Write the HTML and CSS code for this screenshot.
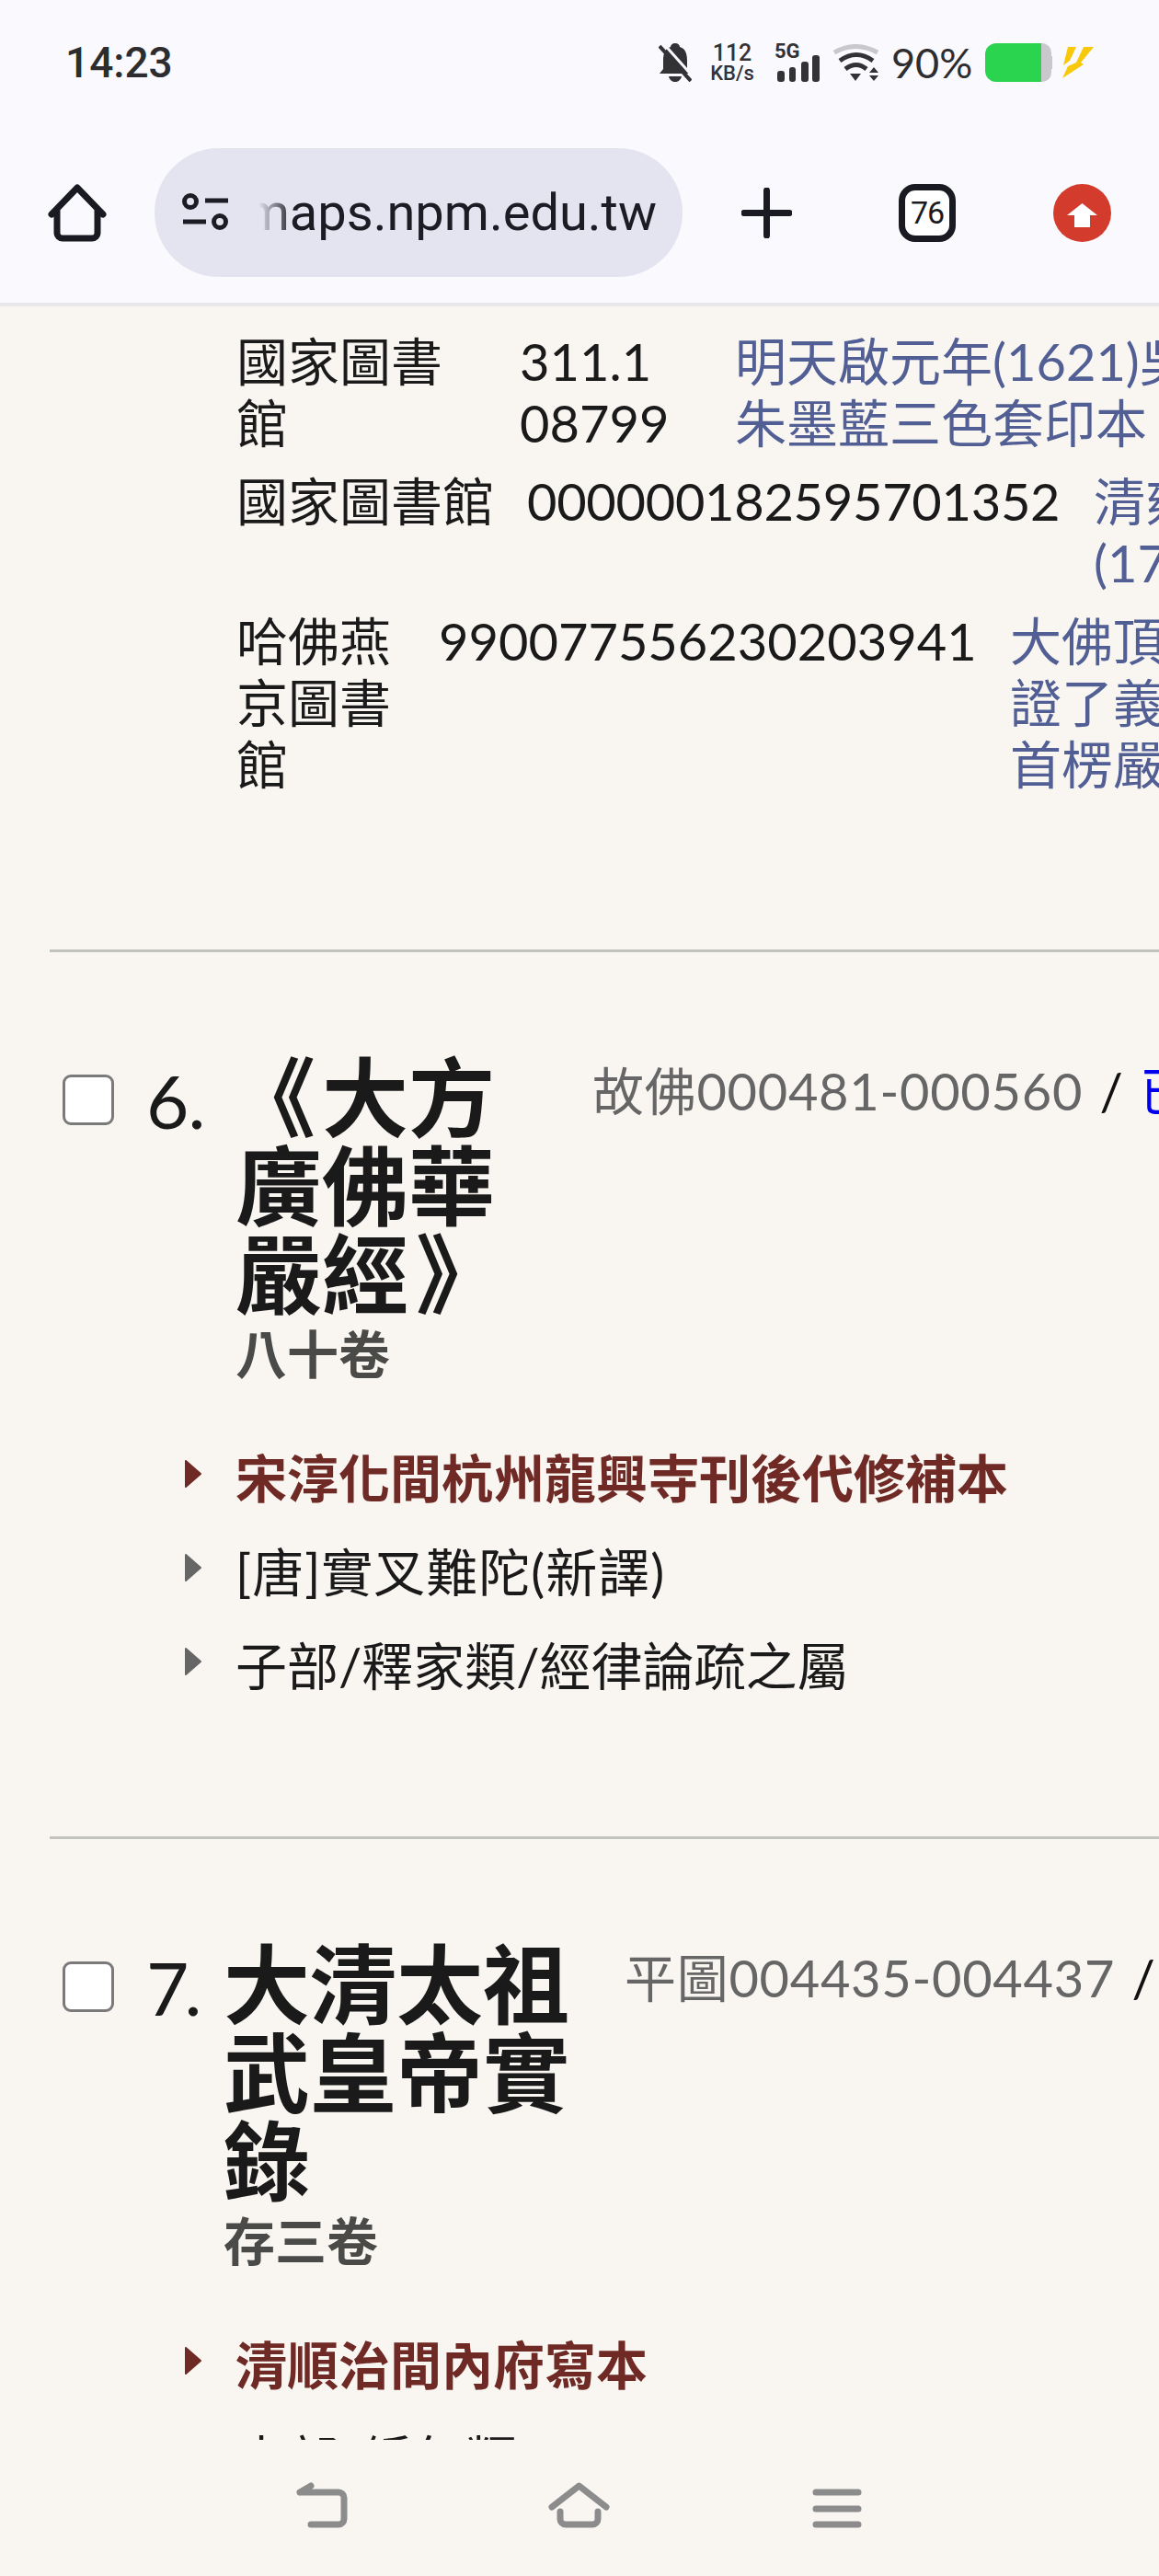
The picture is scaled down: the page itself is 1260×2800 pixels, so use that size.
FILE: index.html
```html
<!DOCTYPE html>
<html lang="zh-Hant">
<head>
<meta charset="utf-8">
<title>maps.npm.edu.tw</title>
<link rel="stylesheet" href="styles.css">
</head>
<body>
<div class="screen">
  <header class="chrome">
    <div class="status">
      <span class="time">14:23</span>
      <div class="status-right">
        <svg class="ic-bell" width="36" height="42" viewBox="0 0 36 42"><path class="dark" d="M18 0c-3 0-5 2-5 4C6 6 5 13 5 19v9l-4 5h34l-4-5v-9c0-6-1-13-8-15 0-2-2-4-5-4z"/><path class="dark" d="M11 36h14c-1 4-4 6-7 6s-6-2-7-6z"/><path d="M5 0l33 37" stroke="#f9f9fe" stroke-width="3"/><path d="M1 3l34 38" stroke="#333336" stroke-width="4"/></svg>
        <div class="speed"><span class="speed-num">112</span><span class="speed-unit">KB/s</span></div>
        <svg class="ic-signal" width="49" height="42" viewBox="0 0 49 42"><text class="fiveg" x="0" y="16">5G</text><rect class="dark" x="3" y="30" width="8" height="12" rx="3"/><rect class="dark" x="16" y="26" width="7" height="16" rx="3"/><rect class="dark" x="29" y="20" width="8" height="22" rx="3"/><rect class="dark" x="41" y="13" width="8" height="29" rx="3"/></svg>
        <svg class="ic-wifi" width="51" height="41" viewBox="0 0 51 41"><path d="M2 9Q25-4 49 9" fill="none" stroke="#c9c9cd" stroke-width="5"/><path d="M8 18Q26 5 44 18" fill="none" stroke="#333336" stroke-width="5"/><path d="M14 27Q26 18 37 27" fill="none" stroke="#333336" stroke-width="5"/><path class="dark" d="M19 32h12l-6 8zM40 31h10l-5-6zM40 34h10l-5 6z"/></svg>
        <span class="percent">90%</span>
        <svg class="ic-battery" width="73" height="42" viewBox="0 0 73 42"><path d="M50 0h12a10 10 0 0 1 10 10v4h1v14h-1v4a10 10 0 0 1-10 10H50z" fill="#c8c8cd"/><path d="M12 0h49v42H12A12 12 0 0 1 0 30V12A12 12 0 0 1 12 0z" fill="#2ad44f"/></svg>
        <svg class="ic-bolt" width="34" height="34" viewBox="0 0 34 34"><path d="M6 0h9L8 15 1 20z" fill="#f7c90a"/><path d="M23 0h11L20 17l3 2L0 34l6-13 9-4z" fill="#f7c90a"/></svg>
      </div>
    </div>
    <nav class="toolbar">
      <svg class="t-home" width="64" height="64" viewBox="0 0 64 64"><path class="tool-line" d="M4 34L32 5l28 29M10 30v24a6 6 0 0 0 6 6h32a6 6 0 0 0 6-6V30"/></svg>
      <div class="pill">
        <svg class="site" width="52" height="44" viewBox="0 0 52 44"><g class="site-line"><circle cx="9" cy="10" r="6.5"/><path d="M25 9h25M1 32h25"/><circle cx="41" cy="32" r="6.5"/></g></svg>
        <div class="url"><span>maps.npm.edu.tw</span></div>
      </div>
      <svg class="t-plus" width="55" height="55" viewBox="0 0 55 55"><path class="tool-line" d="M3 27.500h49M27.500 3v49"/></svg>
      <div class="tabs">76</div>
      <svg class="t-up" width="63" height="63" viewBox="0 0 63 63"><circle cx="31.500" cy="31.500" r="31.500" fill="#d33c2c"/><path d="M31.500 21L15 34h8v13h17V34h8z" fill="#fff"/></svg>
    </nav>
  </header>

  <main class="content">
    <section class="holdings">
      <div class="row row-a">
        <div>國家圖書<br>館</div>
        <div>311.1<br>08799</div>
        <div class="link">明天啟元年(1621)吳興閔氏<br>朱墨藍三色套印本</div>
      </div>
      <div class="row row-b">
        <div>國家圖書館</div>
        <div class="tight">000000182595701352</div>
        <div class="link">清雍正<br>(1735)</div>
      </div>
      <div class="row row-c">
        <div>哈佛燕<br>京圖書<br>館</div>
        <div>990077556230203941</div>
        <div class="link">大佛頂如來<br>證了義諸菩<br>首楞嚴經</div>
      </div>
    </section>

    <article class="item">
      <div class="head">
        <input class="check" type="checkbox" aria-label="選取 6">
        <div class="num num-6">6.</div>
        <div class="title-col title-narrow">
          <h2 class="title"><span class="q-open">《</span>大方廣佛華嚴經<span class="q-close">》</span></h2>
          <div class="sub">八十卷</div>
        </div>
        <div class="call"><span class="call-no">故佛000481-000560</span> / <a class="call-link">已入藏</a></div>
      </div>
      <ul class="facts">
        <li class="fact fact-red"><svg class="tri" width="20" height="32" viewBox="0 0 20 32"><path d="M2 2l16 14L2 30z"/></svg>宋淳化間杭州龍興寺刊後代修補本</li>
        <li class="fact fact-author"><svg class="tri" width="20" height="32" viewBox="0 0 20 32"><path d="M2 2l16 14L2 30z"/></svg>[唐]實叉難陀(新譯)</li>
        <li class="fact"><svg class="tri" width="20" height="32" viewBox="0 0 20 32"><path d="M2 2l16 14L2 30z"/></svg>子部/釋家類/經律論疏之屬</li>
      </ul>
    </article>

    <article class="item">
      <div class="head">
        <input class="check" type="checkbox" aria-label="選取 7">
        <div class="num num-7">7.</div>
        <div class="title-col title-wide">
          <h2 class="title">大清太祖武皇帝實錄</h2>
          <div class="sub">存三卷</div>
        </div>
        <div class="call"><span class="call-no">平圖004435-004437</span> / <a class="call-link">已入藏</a></div>
      </div>
      <ul class="facts">
        <li class="fact fact-red"><svg class="tri" width="20" height="32" viewBox="0 0 20 32"><path d="M2 2l16 14L2 30z"/></svg>清順治間內府寫本</li>
        <li class="fact"><svg class="tri" width="20" height="32" viewBox="0 0 20 32"><path d="M2 2l16 14L2 30z"/></svg>史部/編年類</li>
      </ul>
    </article>
  </main>

  <footer class="nav">
    <div class="nav-btn"><svg width="56" height="50" viewBox="0 0 56 50"><path class="nav-line" d="M4 11H46a6 6 0 0 1 6 6V40a6 6 0 0 1-6 6H16M4 11L16 4"/></svg></div>
    <div class="nav-btn"><svg width="68" height="50" viewBox="0 0 68 50"><path class="nav-line" d="M4 27L33.500 4 63 27M13 32v8a6 6 0 0 0 6 6H48a6 6 0 0 0 6-6v-8"/></svg></div>
    <div class="nav-btn"><svg width="56" height="50" viewBox="0 0 56 50"><path class="nav-line" d="M5 11H51M5 29H51M5 46H51"/></svg></div>
  </footer>
</div>
</body>
</html>
```

FILE: styles.css
```css
* { box-sizing: border-box; }
html, body { margin: 0; padding: 0; background: #f9f6f2; }
.screen {
  width: 1260px;
  height: 2800px;
  overflow: hidden;
  display: flex;
  flex-direction: column;
  background: #f9f6f2;
  color: #1a1a1a;
  font-family: Lato, "Noto Sans CJK TC", sans-serif;
  font-size: 56px;
  line-height: 67px;
}

/* Browser chrome */
.chrome { flex: none; height: 333px; background: #f9f9fe; border-bottom: 4px solid #e8e8ea; }
.status { height: 136px; display: flex; align-items: center; justify-content: space-between; padding: 0 71px; }
.time { font-family: Roboto, sans-serif; font-weight: 500; font-size: 46px; line-height: 46px; color: #2d2d30; }
.status-right { display: flex; align-items: center; }
.dark { fill: #333336; }
.speed { width: 50px; margin-left: 19px; display: flex; flex-direction: column; align-items: center; font-family: Roboto, sans-serif; font-weight: 500; color: #333336; }
.speed-num { font-size: 25px; line-height: 24px; }
.speed-unit { font-size: 22px; line-height: 20px; }
.ic-signal { margin-left: 21px; }
.fiveg { font-family: Roboto, sans-serif; font-weight: 700; font-size: 22px; fill: #333336; }
.ic-wifi { margin-left: 14px; }
.percent { width: 88px; margin-left: 13px; font-size: 45px; line-height: 44px; color: #2d2d30; white-space: nowrap; }
.ic-battery { margin-left: 14px; }
.ic-bolt { margin-left: 11px; }

.toolbar { height: 193px; padding: 0 0 3px 52px; display: flex; align-items: center; }
.tool-line { fill: none; stroke: #1a1a22; stroke-width: 7; stroke-linecap: round; stroke-linejoin: round; }
.pill { width: 574px; height: 140px; margin-left: 52px; border-radius: 70px; background: #e3e4ef; display: flex; align-items: center; padding-left: 30px; }
.site { flex: none; }
.site-line { fill: none; stroke: #1c1c24; stroke-width: 5; }
.url {
  width: 433px;
  margin-left: 31px;
  display: flex;
  justify-content: flex-end;
  overflow: hidden;
  white-space: nowrap;
  font-family: Roboto, sans-serif;
  font-size: 56px;
  line-height: 70px;
  color: #1c1c24;
  -webkit-mask-image: linear-gradient(90deg, transparent 0, #000 38px);
  mask-image: linear-gradient(90deg, transparent 0, #000 38px);
}
.t-plus { margin-left: 64px; }
.tabs { width: 62px; height: 63px; margin-left: 116px; border: 7px solid #1a1a22; border-radius: 18px; background: #fff; display: flex; align-items: center; justify-content: center; font-family: Roboto, sans-serif; font-size: 34px; line-height: 34px; color: #1a1a22; letter-spacing: -1px; }
.t-up { margin-left: 106px; }

/* Page content */
.content { flex: 1; min-height: 0; overflow: hidden; padding-top: 26px; }
.holdings { padding-left: 257px; display: flex; flex-direction: column; gap: 18px; margin-bottom: 168px; }
.row { display: grid; white-space: nowrap; }
.row-a { grid-template-columns: 308px 234px 1fr; }
.row-b { grid-template-columns: 316px 616px 1fr; }
.row-c { grid-template-columns: 220px 621px 1fr; }
.tight { letter-spacing: -0.3px; }
.link { color: #525f94; }

.item { border-top: 3px solid #c3c3be; margin-left: 54px; padding-top: 110px; padding-bottom: 152px; }
.head { display: flex; align-items: flex-start; margin-left: 14px; white-space: nowrap; }
.check { appearance: none; -webkit-appearance: none; flex: none; width: 56px; height: 55px; margin: 23px 0 0; border: 3px solid #7a7a7a; border-radius: 9px; background: #fff; }
.num { flex: none; margin-left: 35px; margin-top: 3px; font-size: 80px; line-height: 96px; font-weight: 400; color: #1a1a1a; }
.num-6 { width: 97px; letter-spacing: -1px; }
.num-7 { width: 84px; letter-spacing: -5px; }
.title-col { flex: none; }
.title-narrow { width: 388px; }
.title-wide { width: 436px; }
.title { margin: 0; font-size: 94px; line-height: 96px; font-weight: 700; white-space: normal; color: #1a1a1a; }
.title-narrow .title { width: 310px; }
.title-wide .title { width: 380px; }
.q-open { margin-left: -7px; margin-right: 7px; }
.q-close { margin-left: 8px; margin-right: -8px; }
.sub { margin-top: 5px; font-weight: 700; color: #4a4a48; }
.call { margin-top: 7px; color: #111; word-spacing: 4px; }
.call-no { color: #666; letter-spacing: 0.7px; }
.call-link { color: #0000ee; }

.facts { list-style: none; margin: 68px 0 0; padding: 0 0 0 146px; display: flex; flex-direction: column; gap: 35px; }
.fact { display: flex; align-items: flex-start; color: #1a1a1a; }
.fact-author { letter-spacing: 1px; }
.tri { flex: none; margin: 13px 36px 0 0; fill: #666; stroke: #666; stroke-width: 2; stroke-linejoin: round; }
.fact-red { color: #6f2a26; font-weight: 700; }
.fact-red .tri { fill: #6f2a26; stroke: #6f2a26; }

/* System nav */
.nav { flex: none; height: 148px; padding-top: 46px; display: flex; justify-content: center; background: #f9f6f2; }
.nav-btn { width: 280px; height: 50px; display: flex; justify-content: center; }
.nav-line { fill: none; stroke: #8c8c8c; stroke-width: 7; stroke-linecap: round; stroke-linejoin: round; }
```
